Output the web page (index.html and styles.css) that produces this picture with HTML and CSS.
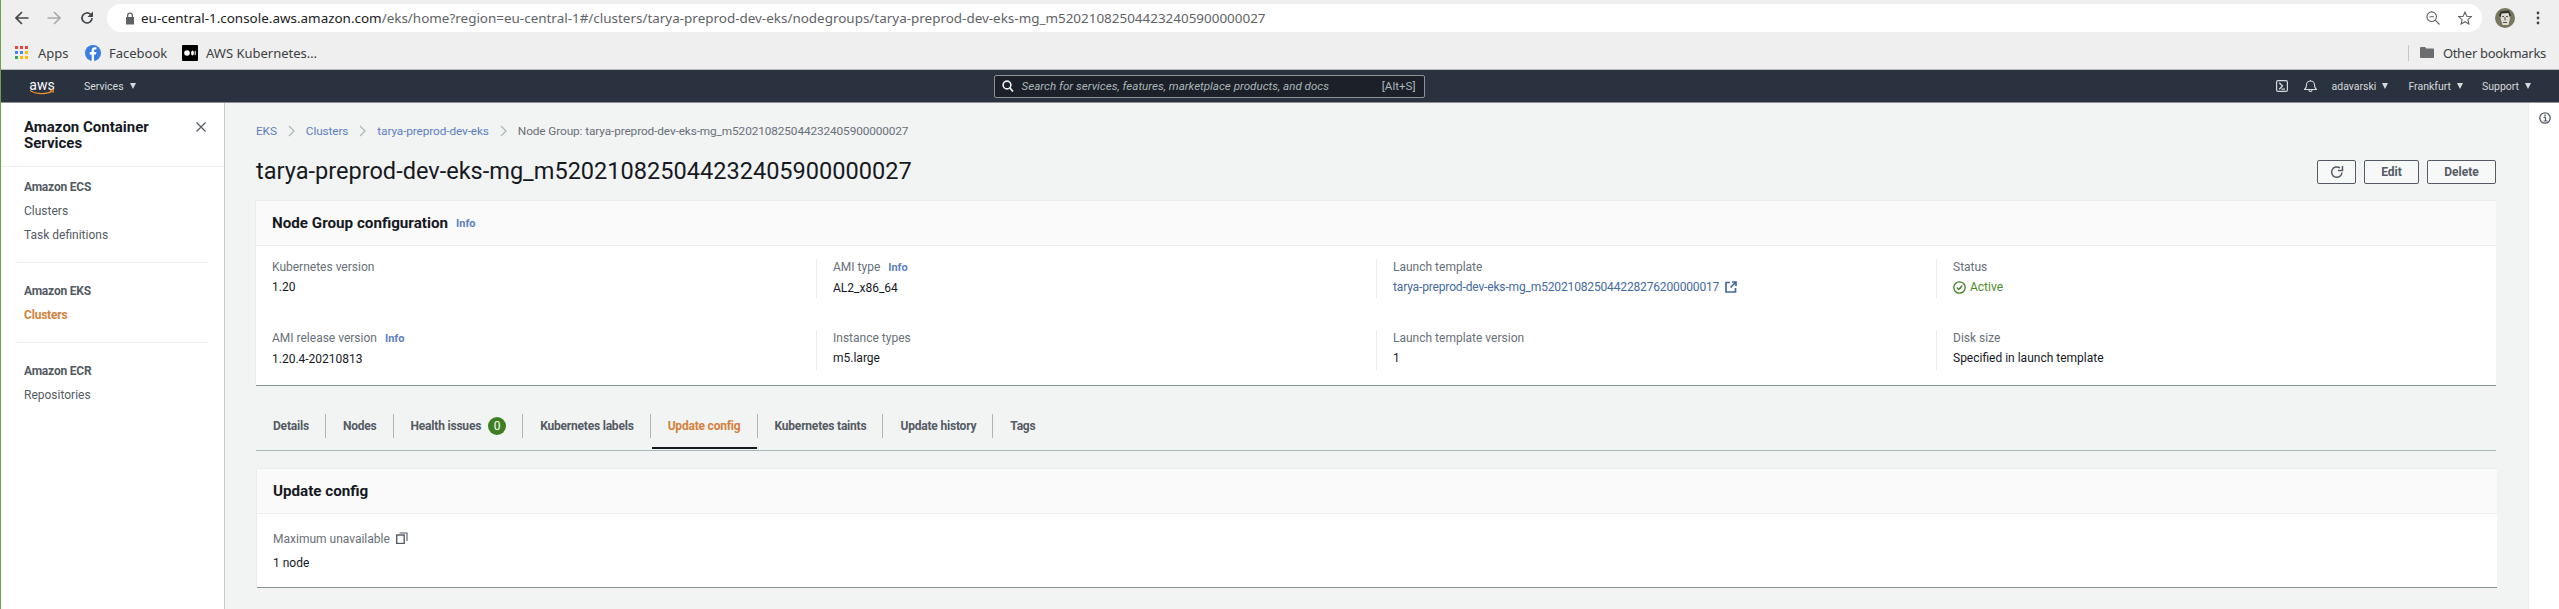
FILE: index.html
```html
<!doctype html>
<html lang="en">
  <head>
    <meta charset="UTF-8" />
    <title>Node group - Amazon Container Services</title>
    <link rel="stylesheet" href="styles.css">
  </head>
  <body>
    <div class="toolbar">
      <svg class="tool-icon" viewBox="0 0 14 14"><path d="M13.500 7H1.500M7 1 1 7l6 6" fill="none" stroke="#45484b" stroke-width="1.700"/></svg>
      <svg class="tool-icon forward" viewBox="0 0 14 14"><path d="M.5 7h12M7 1l6 6-6 6" fill="none" stroke="#a9abad" stroke-width="1.700"/></svg>
      <svg class="tool-icon reload" viewBox="0 0 14 14"><path d="M12 7a5 5 0 1 1-1.500-3.600" fill="none" stroke="#45484b" stroke-width="1.700"/><path d="M13 .5V6H7.500z" fill="#45484b"/></svg>
      <div class="omnibox">
        <svg class="lock" viewBox="0 0 10 13"><path d="M2 5V3.500a3 3 0 0 1 6 0V5h1v7.500H1V5zm1.300 0h3.400V3.500a1.700 1.700 0 0 0-3.400 0z" fill="#5f6368"/></svg>
        <span class="url"><b>eu-central-1.console.aws.amazon.com</b>/eks/home?region=eu-central-1#/clusters/tarya-preprod-dev-eks/nodegroups/tarya-preprod-dev-eks-mg_m520210825044232405900000027</span>
        <svg class="omni-icon" viewBox="0 0 14 14"><circle cx="5.700" cy="5.700" r="4.800" fill="none" stroke="#5f6368" stroke-width="1.100"/><path d="M3.500 5.700h4.400M9.200 9.200l4.300 4.300" stroke="#5f6368" stroke-width="1.100"/></svg>
        <svg class="omni-icon star" viewBox="0 0 14 14"><path d="m7 1 1.800 4.200 4.600.4-3.500 3 1 4.400L7 10.700 3.100 13l1-4.400-3.500-3 4.600-.4z" fill="none" stroke="#5f6368" stroke-width="1.100"/></svg>
      </div>
      <svg class="avatar" viewBox="0 0 20 20">
        <circle cx="10" cy="10" r="10" fill="#77765f"/>
        <path d="M6 4.500h8l1 6-1.500 6.500h-6L5.500 10z" fill="#dedcd2"/>
        <path d="M5.500 3.500 14 2.500l2 5-1.500 1-1-3.500-7 .5-1 4-1.500-2z" fill="#33322c"/>
        <path d="M7 8.500h2M11 8.500h2M10 9v3.500M8 14.500h4" stroke="#33322c" stroke-width=".8" fill="none"/>
      </svg>
      <svg class="kebab" viewBox="0 0 4 14"><circle cx="2" cy="2" r="1.400" fill="#45484b"/><circle cx="2" cy="7" r="1.400" fill="#45484b"/><circle cx="2" cy="12" r="1.400" fill="#45484b"/></svg>
    </div>

    <div class="bookmarks">
      <svg class="apps-icon" viewBox="0 0 13 13">
        <rect width="3" height="3" fill="#ea4335"/><rect x="5" width="3" height="3" fill="#ea4335"/><rect x="10" width="3" height="3" fill="#ea4335"/>
        <rect y="5" width="3" height="3" fill="#4285f4"/><rect x="5" y="5" width="3" height="3" fill="#4285f4"/><rect x="10" y="5" width="3" height="3" fill="#fbbc05"/>
        <rect y="10" width="3" height="3" fill="#34a853"/><rect x="5" y="10" width="3" height="3" fill="#fbbc05"/><rect x="10" y="10" width="3" height="3" fill="#fbbc05"/>
      </svg>
      <span class="bm-apps">Apps</span>
      <svg class="bm-icon" viewBox="0 0 16 16"><circle cx="8" cy="8" r="8" fill="#3b7de0"/><path d="M9 16V9.500h2l.4-2.400H9V5.700c0-.8.300-1.200 1.200-1.200h1.200V2.300C11 2.200 10.300 2.200 9.800 2.200 8 2.200 6.700 3.300 6.700 5.300v1.800H4.700v2.400h2V16z" fill="#fff"/></svg>
      <span class="bm-facebook">Facebook</span>
      <svg class="bm-icon" viewBox="0 0 16 16"><rect width="16" height="16" rx="1" fill="#000"/><circle cx="5" cy="8" r="2.800" fill="#fff"/><ellipse cx="10.500" cy="8" rx="1.400" ry="2.600" fill="#fff"/><ellipse cx="13.200" cy="8" rx=".6" ry="2.400" fill="#fff"/></svg>
      <span class="bm-aws">AWS Kubernetes…</span>
      <div class="bm-right">
        <svg class="folder" viewBox="0 0 14 11"><path d="M0 1a1 1 0 0 1 1-1h4l1.500 1.500H13a1 1 0 0 1 1 1V10a1 1 0 0 1-1 1H1a1 1 0 0 1-1-1z" fill="#6b6e71"/></svg>
        <span>Other bookmarks</span>
      </div>
    </div>

    <nav class="topnav">
      <svg class="aws-logo" viewBox="0 0 27 17">
        <text x="13" y="11.500" text-anchor="middle" class="aws-word">aws</text>
        <path d="M1 12.500c6 4 17 4.300 22.500.6" fill="none" stroke="#ec912d" stroke-width="1.200"/>
        <path d="m21 12.300 3.700-.5-.9 3.200" fill="none" stroke="#ec912d" stroke-width="1"/>
      </svg>
      <span class="nav-item services">Services<i class="caret"></i></span>
      <div class="search">
        <svg class="search-icon" viewBox="0 0 12 12"><circle cx="5" cy="5" r="3.900" fill="none" stroke="#eaeded" stroke-width="1.600"/><path d="m7.500 7.500 3.500 4" stroke="#eaeded" stroke-width="1.800"/></svg>
        <span class="search-text">Search for services, features, marketplace products, and docs</span>
        <span class="search-key">[Alt+S]</span>
      </div>
      <svg class="nav-terminal" viewBox="0 0 12 12"><rect x=".6" y=".6" width="10.800" height="10.800" rx="1.500" fill="none" stroke="#d5dbdb" stroke-width="1.200"/><path d="M3.200 2.800 6.500 6 3.200 9.200M5.500 9.200h3.500" fill="none" stroke="#d5dbdb" stroke-width="1.300"/></svg>
      <svg class="nav-bell" viewBox="0 0 13 12"><path d="M.5 9.500C2 8.500 2.500 7 2.500 5a4 4 0 0 1 8 0c0 2 .5 3.500 2 4.500zM5 10a1.500 1.500 0 0 0 3 0M6.500 0v1" fill="none" stroke="#d5dbdb" stroke-width="1.100"/></svg>
      <span class="nav-item user">adavarski<i class="caret"></i></span>
      <span class="nav-item region">Frankfurt<i class="caret"></i></span>
      <span class="nav-item">Support<i class="caret"></i></span>
    </nav>

    <div class="layout">
      <aside class="sidebar">
        <div class="side-head">
          <h2>Amazon Container Services</h2>
          <svg class="side-close" viewBox="0 0 10 10"><path d="m.5.500 9 9m0-9-9 9" stroke="#545b64" stroke-width="1.200"/></svg>
        </div>
        <div class="side-group">
          <h3>Amazon ECS</h3>
          <a>Clusters</a>
          <a>Task definitions</a>
        </div>
        <div class="side-group">
          <h3>Amazon EKS</h3>
          <a class="current">Clusters</a>
        </div>
        <div class="side-group last">
          <h3>Amazon ECR</h3>
          <a>Repositories</a>
        </div>
      </aside>

      <main class="content">
        <div class="crumbs">
          <a>EKS</a>
          <svg class="chev" viewBox="0 0 7 12"><path d="m1 1 5 5-5 5" fill="none" stroke="#aab7b8" stroke-width="1.200"/></svg>
          <a>Clusters</a>
          <svg class="chev" viewBox="0 0 7 12"><path d="m1 1 5 5-5 5" fill="none" stroke="#aab7b8" stroke-width="1.200"/></svg>
          <a>tarya-preprod-dev-eks</a>
          <svg class="chev" viewBox="0 0 7 12"><path d="m1 1 5 5-5 5" fill="none" stroke="#aab7b8" stroke-width="1.200"/></svg>
          <span>Node Group: tarya-preprod-dev-eks-mg_m520210825044232405900000027</span>
        </div>

        <div class="title-row">
          <h1>tarya-preprod-dev-eks-mg_m520210825044232405900000027</h1>
          <div class="actions">
            <button class="btn btn-icon"><svg viewBox="0 0 14 14"><path d="M12 7.500A5.200 5.200 0 1 1 10 3" fill="none" stroke="#545b64" stroke-width="1.500"/><path d="M12.500 1v4.500H8" fill="none" stroke="#545b64" stroke-width="1.500"/></svg></button>
            <button class="btn btn-edit">Edit</button>
            <button class="btn btn-delete">Delete</button>
          </div>
        </div>

        <section class="card">
          <div class="card-head">
            <h2>Node Group configuration</h2>
            <a class="info">Info</a>
          </div>
          <div class="card-grid">
            <div class="field">
              <div class="label">Kubernetes version</div>
              <div class="value">1.20</div>
            </div>
            <div class="field">
              <div class="label">AMI type <a class="info">Info</a></div>
              <div class="value">AL2_x86_64</div>
            </div>
            <div class="field">
              <div class="label">Launch template</div>
              <div class="value link">tarya-preprod-dev-eks-mg_m520210825044228276200000017
                <svg class="ext" viewBox="0 0 12 12"><path d="M5 1.500H1v9.500h9.500V7M7 1h4v4M11 1 5.500 6.500" fill="none" stroke="#44699f" stroke-width="1.700"/></svg>
              </div>
            </div>
            <div class="field">
              <div class="label">Status</div>
              <div class="value active">
                <svg class="ok" viewBox="0 0 13 13"><circle cx="6.500" cy="6.500" r="5.700" fill="none" stroke="#3f7f23" stroke-width="1.300"/><path d="m3.800 6.500 2 2 3.500-4" fill="none" stroke="#3f7f23" stroke-width="1.300"/></svg>
                Active
              </div>
            </div>
            <div class="field">
              <div class="label">AMI release version <a class="info">Info</a></div>
              <div class="value">1.20.4-20210813</div>
            </div>
            <div class="field">
              <div class="label">Instance types</div>
              <div class="value">m5.large</div>
            </div>
            <div class="field">
              <div class="label">Launch template version</div>
              <div class="value">1</div>
            </div>
            <div class="field">
              <div class="label">Disk size</div>
              <div class="value">Specified in launch template</div>
            </div>
          </div>
        </section>

        <div class="tabs">
          <a class="tab">Details</a>
          <a class="tab">Nodes</a>
          <a class="tab">Health issues <span class="badge">0</span></a>
          <a class="tab">Kubernetes labels</a>
          <a class="tab selected">Update config</a>
          <a class="tab">Kubernetes taints</a>
          <a class="tab">Update history</a>
          <a class="tab last">Tags</a>
        </div>

        <section class="card second">
          <div class="card-head">
            <h2>Update config</h2>
          </div>
          <div class="card-body">
            <div class="label">Maximum unavailable
              <svg class="copy" viewBox="0 0 12 12"><rect x=".7" y="3" width="7.500" height="8.500" fill="none" stroke="#545b64" stroke-width="1.400"/><path d="M3.500 1h7.500v8" fill="none" stroke="#545b64" stroke-width="1.100"/></svg>
            </div>
            <div class="value">1 node</div>
          </div>
        </section>
      </main>

      <div class="rail">
        <svg class="rail-info" viewBox="0 0 12 12"><circle cx="6" cy="6" r="5.200" fill="none" stroke="#545b64" stroke-width="1.300"/><circle cx="6" cy="3.500" r=".9" fill="#545b64"/><path d="M4.500 5.500H6.500V9M4.500 9h4" fill="none" stroke="#545b64" stroke-width="1.200"/></svg>
      </div>
    </div>
  </body>
</html>
```
FILE: styles.css
```css
html,
body {
  height: 100%;
}

body {
  margin: 0;
  overflow: hidden;
  display: flex;
  flex-direction: column;
  border-left: 1px solid #6ea24a;
  background: #f2f3f3;
  font-family: Roboto, "Noto Sans", sans-serif;
  font-size: 12px;
  color: #16191f;
}

a {
  color: inherit;
}

/* browser chrome */
.toolbar {
  height: 36px;
  flex: none;
  display: flex;
  align-items: center;
  background: #efefef;
  padding-left: 14px;
}

.tool-icon {
  width: 14px;
  height: 14px;
  flex: none;
}

.tool-icon.forward {
  margin-left: 18px;
}

.tool-icon.reload {
  margin-left: 19px;
}

.omnibox {
  flex: none;
  width: 2375px;
  height: 28px;
  margin: 0 0 0 13px;
  border-radius: 14px;
  background: #fff;
  display: flex;
  align-items: center;
  padding-left: 18px;
  box-sizing: border-box;
}

.lock {
  width: 10px;
  height: 13px;
  flex: none;
}

.url {
  margin-left: 6px;
  font-family: "Noto Sans", sans-serif;
  font-size: 13.44px;
  color: #5f6368;
  white-space: nowrap;
}

.url b {
  font-weight: 400;
  color: #202124;
}

.omni-icon {
  width: 14px;
  height: 14px;
  flex: none;
  margin-left: auto;
}

.omni-icon.star {
  margin: 0 10px 0 18px;
}

.avatar {
  width: 20px;
  height: 20px;
  margin-left: 13px;
  flex: none;
}

.kebab {
  width: 4px;
  height: 14px;
  margin-left: 21px;
  flex: none;
}

.bookmarks {
  height: 33px;
  flex: none;
  display: flex;
  align-items: center;
  background: #efefef;
  border-bottom: 1px solid #b9babb;
  box-sizing: content-box;
  font-family: "Noto Sans", sans-serif;
  font-size: 13px;
  color: #3c4043;
  padding-left: 14px;
}

.apps-icon {
  width: 13px;
  height: 13px;
  flex: none;
}

.bm-apps {
  width: 30px;
  margin-left: 10px;
}

.bm-icon {
  width: 16px;
  height: 16px;
  flex: none;
}

.bm-apps + .bm-icon {
  margin-left: 17px;
}

.bm-facebook {
  width: 56px;
  margin: 0 17px 0 8px;
}

.bm-aws {
  margin-left: 8px;
}

.bm-right {
  margin-left: auto;
  display: flex;
  align-items: center;
  margin-right: 13px;
  letter-spacing: -0.3px;
}

.bm-right::before {
  content: "";
  width: 1px;
  height: 16px;
  background: #c4c5c6;
  margin-right: 11px;
}

.folder {
  width: 14px;
  height: 11px;
  margin-right: 9px;
}

/* aws console nav */
.topnav {
  height: 32px;
  flex: none;
  display: flex;
  align-items: center;
  background: #2a313f;
  border-bottom: 1px solid #8a9096;
  color: #d5dbdb;
  font-size: 10.5px;
  padding-left: 28px;
}

.aws-logo {
  width: 27px;
  height: 17px;
  flex: none;
}

.aws-word {
  font-family: Roboto, sans-serif;
  font-size: 14px;
  fill: #fff;
}

.nav-item {
  display: flex;
  align-items: center;
  white-space: nowrap;
}

.nav-item.services {
  margin-left: 28px;
}

.caret {
  width: 0;
  height: 0;
  margin-left: 6px;
  border-left: 3.500px solid transparent;
  border-right: 3.500px solid transparent;
  border-top: 6px solid #d5dbdb;
}

.search {
  flex: none;
  width: 431px;
  height: 23px;
  margin-left: 858px;
  display: flex;
  align-items: center;
  box-sizing: border-box;
  background: #1b2029;
  border: 1px solid #879596;
  border-radius: 2px;
  padding: 0 8px 0 7px;
  font-size: 11.6px;
}

.search-icon {
  width: 12px;
  height: 12px;
  flex: none;
}

.search-text {
  margin-left: 8px;
  font-style: italic;
  color: #aab7b8;
}

.search-key {
  margin-left: auto;
  color: #aab7b8;
}

.nav-terminal {
  width: 12px;
  height: 12px;
  flex: none;
  margin-left: 851px;
}

.nav-bell {
  width: 13px;
  height: 12px;
  flex: none;
  margin-left: 16px;
}

.nav-item.user {
  margin-left: 15px;
}

.nav-item.region {
  margin-left: 20px;
}

.nav-item.region + .nav-item {
  margin-left: 19px;
}

/* page */
.layout {
  flex: 1;
  min-height: 0;
  display: flex;
}

.sidebar {
  width: 223px;
  flex: none;
  background: #fff;
  border-right: 1px solid #c6cacb;
}

.side-head {
  height: 64px;
  box-sizing: border-box;
  display: flex;
  align-items: flex-start;
  justify-content: space-between;
  padding: 16px 18px 0 23px;
  border-bottom: 1px solid #eaeded;
}

.side-head h2 {
  margin: 0;
  width: 150px;
  font-size: 15px;
  line-height: 16px;
  font-weight: 700;
  color: #16191f;
}

.side-close {
  width: 10px;
  height: 10px;
  margin-top: 3px;
  flex: none;
}

.side-group {
  margin: 0 16px 0 15px;
  padding: 12px 0 11px 8px;
  border-bottom: 1px solid #eaeded;
  color: #545b64;
}

.side-group + .side-group {
  padding-top: 20px;
}

.side-group.last {
  border-bottom: 0;
}

.side-group h3 {
  margin: 0;
  height: 24px;
  line-height: 16px;
  font-size: 12px;
  font-weight: 700;
  letter-spacing: -0.2px;
}

.side-group a {
  display: block;
  height: 24px;
  line-height: 16px;
}

.side-group a.current {
  color: #d4813c;
  font-weight: 700;
  letter-spacing: -0.2px;
}

.content {
  flex: 1;
  min-width: 0;
  padding: 20px 32px 0 31px;
}

.crumbs {
  display: flex;
  align-items: center;
  height: 16px;
  color: #687078;
  font-size: 11.8px;
  letter-spacing: -0.1px;
}

.crumbs a {
  color: #5d7fbf;
}

.chev {
  width: 7px;
  height: 12px;
  margin: 0 11px;
}

.title-row {
  display: flex;
  align-items: center;
  height: 32px;
  margin-top: 16px;
}

h1 {
  margin: 0;
  font-size: 23.55px;
  font-weight: 400;
  white-space: nowrap;
}

.actions {
  margin-left: auto;
  display: flex;
  gap: 8px;
  margin-top: 2px;
}

.btn {
  height: 24px;
  padding: 0;
  background: #f7f8f8;
  border: 1px solid #545b64;
  border-radius: 2px;
  font-family: inherit;
  font-size: 12px;
  font-weight: 700;
  color: #545b64;
}

.btn-icon {
  width: 39px;
}

.btn-icon svg {
  width: 14px;
  height: 14px;
  display: block;
  margin: 0 auto;
}

.btn-edit {
  width: 55px;
}

.btn-delete {
  width: 69px;
}

.card {
  margin-top: 13px;
  background: #fff;
  box-shadow: -1px 0 1px -1px #0003;
  border-bottom: 1px solid #879596;
}

.card-head {
  height: 46px;
  box-sizing: border-box;
  display: flex;
  align-items: center;
  padding-left: 16px;
  background: #fafafa;
  border-top: 1px solid #eaeded;
  border-bottom: 1px solid #eaeded;
}

.card-head h2 {
  margin: 0;
  font-size: 15.2px;
  font-weight: 700;
  color: #16191f;
}

.info {
  font-size: 11px;
  font-weight: 700;
  color: #5d7fbf;
  margin-left: 8px;
}

.label .info {
  margin-left: 5px;
}

.card-grid {
  display: grid;
  grid-template-columns: repeat(4, 1fr);
  row-gap: 32px;
  padding: 13px 0 15px;
}

.field {
  padding-left: 16px;
  border-left: 1px solid #eaeded;
  min-height: 38px;
}

.field:nth-child(4n + 1) {
  border-left: 0;
}

.field:nth-child(n + 5) {
  min-height: 40px;
}

.label {
  line-height: 16px;
  color: #687078;
}

.value {
  margin-top: 2px;
  line-height: 20px;
  color: #16191f;
}

.value.link {
  color: #44699f;
  display: flex;
  align-items: center;
  gap: 6px;
  letter-spacing: -0.15px;
}

.ext {
  width: 12px;
  height: 12px;
}

.value.active {
  color: #4c8a2c;
  display: flex;
  align-items: center;
  gap: 4px;
}

.ok {
  width: 13px;
  height: 13px;
}

.tabs {
  display: flex;
  margin-top: 21px;
  height: 43px;
  border-bottom: 1px solid #aab7b8;
  box-sizing: content-box;
  font-weight: 700;
  color: #545b64;
  letter-spacing: -0.2px;
}

.tab {
  position: relative;
  display: flex;
  align-items: center;
  height: 24px;
  margin-top: 7px;
  padding: 0 16px 0 17px;
  border-right: 1px solid #aab7b8;
}

.tab.last {
  border-right: 0;
}

.tab.selected {
  color: #d4813c;
}

.tab.selected::after {
  content: "";
  position: absolute;
  left: 1px;
  right: 0;
  top: 33px;
  height: 2px;
  background: #16191f;
}

.badge {
  width: 18px;
  height: 18px;
  margin-left: 7px;
  border-radius: 9px;
  background: #3f7f23;
  color: #fff;
  font-weight: 400;
  line-height: 18px;
  text-align: center;
}

.card.second {
  margin-top: 17px;
  margin-left: 1px;
  margin-right: -1px;
}

.card-body {
  padding: 17px 16px 15px;
  height: 41px;
}

.card-body .value {
  margin-top: 6px;
}

.copy {
  width: 12px;
  height: 12px;
  margin-left: 3px;
  vertical-align: -1px;
}

.rail {
  width: 31px;
  flex: none;
  background: #fff;
  border-left: 1px solid #eaeded;
  box-sizing: border-box;
  padding: 9px 0 0 10px;
}

.rail-info {
  width: 12px;
  height: 12px;
  display: block;
}
```
